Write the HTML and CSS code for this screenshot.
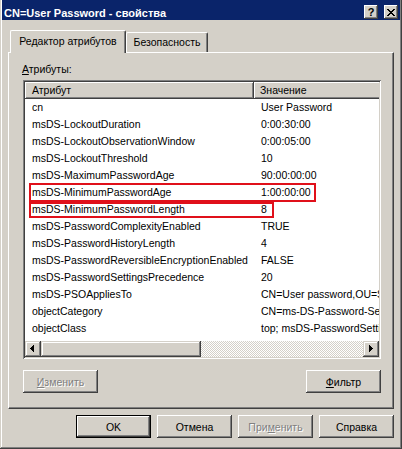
FILE: index.html
```html
<!DOCTYPE html>
<html lang="ru">
<head>
<meta charset="utf-8">
<title>CN=User Password - свойства</title>
<link rel="stylesheet" href="styles.css">
</head>
<body>
<div class="window">
  <div class="titlebar">
    <span class="title">CN=User Password - свойства</span>
    <div class="tb-buttons">
      <div class="tb-btn help">?</div>
      <div class="tb-btn close">
        <svg width="8" height="7" viewBox="0 0 8 7"><path fill="#000" d="M0 0h2v1H0z M6 0h2v1H6z M1 1h2v1H1z M5 1h2v1H5z M2 2h4v1H2z M3 3h2v1H3z M2 4h4v1H2z M1 5h2v1H1z M5 5h2v1H5z M0 6h2v1H0z M6 6h2v1H6z"/></svg>
      </div>
    </div>
  </div>
  <div class="body">
    <div class="tabs">
      <div class="tab active">Редактор атрибутов</div>
      <div class="tab second">Безопасность</div>
    </div>
    <div class="panel">
      <div class="label"><u>А</u>трибуты:</div>
      <div class="list">
        <div class="viewport">
          <div class="header">
            <div class="hcell hc1">Атрибут</div>
            <div class="hcell hc2">Значение</div>
          </div>
          <div class="row"><div class="c1">cn</div><div class="c2">User Password</div></div>
          <div class="row"><div class="c1">msDS-LockoutDuration</div><div class="c2">0:00:30:00</div></div>
          <div class="row"><div class="c1">msDS-LockoutObservationWindow</div><div class="c2">0:00:05:00</div></div>
          <div class="row"><div class="c1">msDS-LockoutThreshold</div><div class="c2">10</div></div>
          <div class="row"><div class="c1">msDS-MaximumPasswordAge</div><div class="c2">90:00:00:00</div></div>
          <div class="row"><div class="c1">msDS-MinimumPasswordAge</div><div class="c2">1:00:00:00</div></div>
          <div class="row"><div class="c1">msDS-MinimumPasswordLength</div><div class="c2">8</div></div>
          <div class="row"><div class="c1">msDS-PasswordComplexityEnabled</div><div class="c2">TRUE</div></div>
          <div class="row"><div class="c1">msDS-PasswordHistoryLength</div><div class="c2">4</div></div>
          <div class="row"><div class="c1">msDS-PasswordReversibleEncryptionEnabled</div><div class="c2">FALSE</div></div>
          <div class="row"><div class="c1">msDS-PasswordSettingsPrecedence</div><div class="c2">20</div></div>
          <div class="row"><div class="c1">msDS-PSOAppliesTo</div><div class="c2">CN=User password,OU=Sales,DC=test,DC=local</div></div>
          <div class="row"><div class="c1">objectCategory</div><div class="c2">CN=ms-DS-Password-Settings,CN=Schema</div></div>
          <div class="row"><div class="c1">objectClass</div><div class="c2">top; msDS-PasswordSettings</div></div>
        </div>
        <div class="hscroll">
          <div class="sb-btn">
            <svg width="16" height="16" viewBox="0 0 16 16"><path fill="#000" d="M5 7h1v1H5z M6 6h1v3H6z M7 5h1v5H7z M8 4h1v7H8z"/></svg>
          </div>
          <div class="sb-thumb"></div>
          <div class="sb-track"></div>
          <div class="sb-btn">
            <svg width="16" height="16" viewBox="0 0 16 16"><path fill="#000" d="M6 4h1v7H6z M7 5h1v5H7z M8 6h1v3H8z M9 7h1v1H9z"/></svg>
          </div>
        </div>
        <div class="mark mark-age"></div>
        <div class="mark mark-length"></div>
      </div>
      <div class="panel-buttons">
        <div class="btn disabled"><span><u>И</u>зменить</span></div>
        <div class="btn"><span><u>Ф</u>ильтр</span></div>
      </div>
    </div>
    <div class="dialog-buttons">
      <div class="btn default">OK</div>
      <div class="btn">Отмена</div>
      <div class="btn disabled"><span>При<u>м</u>енить</span></div>
      <div class="btn">Справка</div>
    </div>
  </div>
</div>
</body>
</html>
```
FILE: styles.css
```css
* { box-sizing: border-box; }
html, body { margin: 0; padding: 0; }
body {
  width: 402px;
  height: 449px;
  overflow: hidden;
  background: #d4d0c8;
  font-family: "Liberation Sans", Arial, sans-serif;
  font-size: 10.5px;
  color: #000;
}
.window {
  width: 402px;
  height: 449px;
  background: #d4d0c8;
  padding: 0 2px 3px 2px;
  display: flex;
  flex-direction: column;
  box-shadow: inset -1px -1px #404040, inset 1px 0 #d4d0c8, inset -2px -2px #808080, inset 2px 0 #fff;
}
.titlebar {
  height: 20px;
  flex: none;
  background: #0a246a;
  color: #fff;
  display: flex;
  align-items: flex-start;
  padding: 0 2px;
}
.title {
  margin-top: 6px;
  line-height: 14px;
  font-size: 11px;
  font-weight: bold;
  white-space: nowrap;
}
.tb-buttons {
  margin-left: auto;
  display: flex;
  gap: 6px;
  margin-top: 5px;
}
.tb-btn {
  width: 14px;
  height: 14px;
  background: #d4d0c8;
  color: #000;
  display: flex;
  align-items: center;
  justify-content: center;
  box-shadow: inset -1px -1px #404040, inset 1px 1px #fff, inset -2px -2px #808080;
}
.tb-btn.help {
  font-weight: bold;
  font-size: 11px;
  line-height: 12px;
}
.tb-btn svg { display: block; }
.body {
  flex: 1;
  padding: 10px 6px 0 6px;
  display: flex;
  flex-direction: column;
}
.tabs {
  height: 22px;
  display: flex;
  align-items: flex-end;
  padding-left: 2px;
}
.tab {
  height: 20px;
  line-height: 18px;
  text-align: center;
  white-space: nowrap;
  border-top: 1px solid #fff;
  border-left: 1px solid #fff;
  border-right: 1px solid #404040;
  box-shadow: inset -1px 0 #808080;
  border-top-left-radius: 2px;
  border-top-right-radius: 2px;
}
.tab.active {
  position: relative;
  z-index: 1;
  height: 23px;
  margin-bottom: -1px;
  width: 116px;
  line-height: 20px;
  background: #d4d0c8;
}
.tab.second {
  width: 82px;
}
.panel {
  height: 357px;
  flex: none;
  border-top: 1px solid #fff;
  border-left: 1px solid #fff;
  border-right: 1px solid #404040;
  border-bottom: 1px solid #404040;
  box-shadow: inset -1px -1px #808080;
  padding: 10px 12px 15px 14px;
  display: flex;
  flex-direction: column;
}
.label {
  line-height: 13px;
  height: 13px;
  margin-left: -1px;
}
.list {
  position: relative;
  margin-top: 4px;
  height: 279px;
  padding: 2px;
  background: #fff;
  display: flex;
  flex-direction: column;
  box-shadow: inset 1px 1px #808080, inset -1px -1px #fff, inset 2px 2px #404040, inset -2px -2px #d4d0c8;
}
.viewport {
  flex: 1;
  overflow: hidden;
  background: #fff;
}
.header {
  display: flex;
  height: 17px;
  width: 600px;
}
.hcell {
  height: 17px;
  line-height: 16px;
  background: #d4d0c8;
  white-space: nowrap;
  box-shadow: inset -1px -1px #404040, inset 1px 1px #fff, inset -2px -2px #808080;
}
.hc1 { width: 229px; padding-left: 7px; }
.hc2 { width: 300px; padding-left: 6px; }
.row {
  display: flex;
  height: 17px;
  line-height: 17px;
  width: 600px;
  white-space: nowrap;
}
.c1 { width: 229px; padding-left: 7px; overflow: hidden; }
.c2 { width: 360px; padding-left: 7px; }
.hscroll {
  height: 16px;
  flex: none;
  display: flex;
}
.sb-btn {
  width: 16px;
  height: 16px;
  background: #d4d0c8;
  box-shadow: inset -1px -1px #404040, inset 1px 1px #d4d0c8, inset -2px -2px #808080, inset 2px 2px #fff;
}
.sb-btn svg { display: block; }
.sb-thumb {
  width: 160px;
  height: 16px;
  background: #d4d0c8;
  box-shadow: inset -1px -1px #404040, inset 1px 1px #d4d0c8, inset -2px -2px #808080, inset 2px 2px #fff;
}
.sb-track {
  flex: 1;
  background: repeating-conic-gradient(#fff 0 25%, #d4d0c8 0 50%) 0 0 / 2px 2px;
}
.mark {
  position: absolute;
  border: 2px solid #e0101a;
}
.mark-age { left: 6px; top: 103px; width: 287px; height: 19px; }
.mark-length { left: 6px; top: 122px; width: 245px; height: 16px; }
.panel-buttons {
  margin-top: 11px;
  display: flex;
  justify-content: space-between;
}
.btn {
  width: 75px;
  height: 23px;
  background: #d4d0c8;
  display: flex;
  align-items: center;
  justify-content: center;
  white-space: nowrap;
  box-shadow: inset -1px -1px #404040, inset 1px 1px #fff, inset -2px -2px #808080;
}
.btn.default {
  box-shadow: inset 0 0 0 1px #000, inset -2px -2px #404040, inset 2px 2px #fff, inset -3px -3px #808080;
}
.btn.disabled {
  color: #808080;
  text-shadow: 1px 1px 0 #fff;
}
.dialog-buttons {
  margin-top: 6px;
  display: flex;
  justify-content: flex-end;
  gap: 6px;
}
```
